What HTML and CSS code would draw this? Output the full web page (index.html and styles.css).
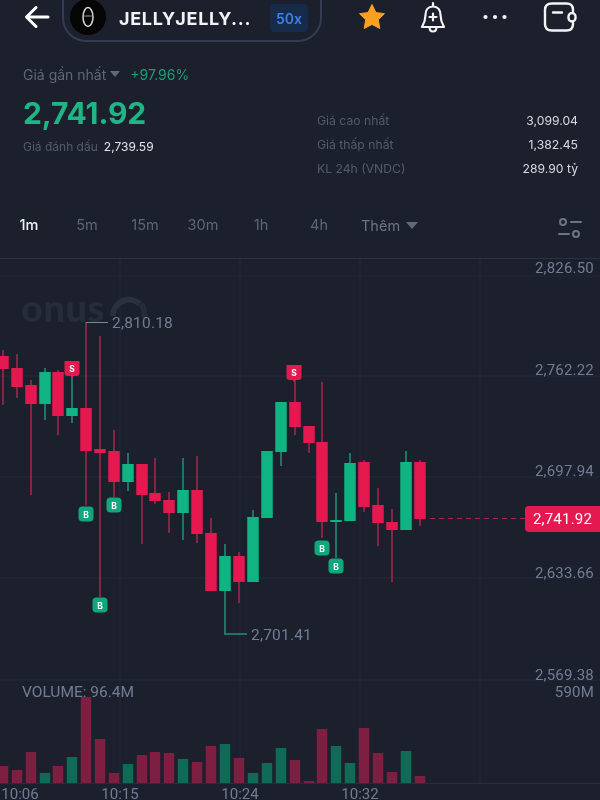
FILE: index.html
```html
<!DOCTYPE html>
<html lang="vi">
<head>
<meta charset="utf-8">
<title>JELLYJELLY</title>
<link rel="stylesheet" href="styles.css">
</head>
<body>
<div class="screen">
  <header class="topbar">
    <svg class="back" width="26" height="26" viewBox="0 0 26 26"><path d="M24 13H3M12 3.500 2.500 13 12 22.500"/></svg>
    <div class="pill">
      <svg class="avatar" width="36" height="36" viewBox="0 0 36 36"><circle cx="18" cy="18" r="18" fill="#050505"/><ellipse cx="18" cy="18" rx="5" ry="9.500" fill="none" stroke="#d8d8d8" stroke-width="1.500"/><path d="M13.500 17h9" stroke="#999" stroke-width="1"/></svg>
      <span class="symbol">JELLYJELLY...</span>
      <span class="leverage">50x</span>
    </div>
    <svg class="star" width="30" height="30" viewBox="0 0 30 30"><path d="M15 2.500l3.900 8 8.600 1.200-6.200 6.100 1.500 8.700L15 22.400l-7.800 4.100 1.500-8.700-6.200-6.100 8.600-1.200z"/></svg>
    <svg class="bell" width="28" height="32" viewBox="0 0 28 32"><path d="M14 5.500c-5 0-7.500 3.600-7.500 8.500 0 5-1.200 8-3.500 12h22c-2.300-4-3.500-7-3.500-12 0-4.900-2.500-8.500-7.500-8.500zM14 2v3.500M10.500 26c0 6 7 6 7 0M14 12.500v7M10.500 16h7"/></svg>
    <svg class="dots" width="24" height="6" viewBox="0 0 24 6"><circle cx="2.500" cy="3" r="2.100"/><circle cx="12" cy="3" r="2.100"/><circle cx="21.500" cy="3" r="2.100"/></svg>
    <svg class="wallet" width="36" height="32" viewBox="0 0 36 32"><path d="M31 10V9C31 4.500 29 2.500 24.500 2.500H10C5.500 2.500 3 4.500 3 9v14C3 27.500 5.500 29.500 10 29.500h14.500C29 29.500 31 27.500 31 23v-1M11 11.500h9"/><rect x="26.500" y="12" width="7" height="8.500" rx="3.500"/></svg>
  </header>

  <section class="stats">
    <div class="stats-left">
      <div class="last-row">
        <span class="muted">Giá gần nhất</span>
        <span class="caret"></span>
        <span class="change">+97.96%</span>
      </div>
      <div class="price">2,741.92</div>
      <div class="mark-row"><span class="muted-sm">Giá đánh dấu</span><span class="mark-val">2,739.59</span></div>
    </div>
    <div class="stats-right">
      <div class="stat-row"><span>Giá cao nhất</span><b>3,099.04</b></div>
      <div class="stat-row"><span>Giá thấp nhất</span><b>1,382.45</b></div>
      <div class="stat-row"><span>KL 24h (VNDC)</span><b>289.90 tỷ</b></div>
    </div>
  </section>

  <nav class="tabs">
    <span class="tab active">1m</span>
    <span class="tab">5m</span>
    <span class="tab">15m</span>
    <span class="tab">30m</span>
    <span class="tab">1h</span>
    <span class="tab">4h</span>
    <span class="more">Thêm<span class="caret caret-lg"></span></span>
    <svg class="filter" width="26" height="24" viewBox="0 0 26 24"><circle cx="6" cy="6" r="3"/><circle cx="19" cy="18" r="3"/><path d="M14 6h10M2 18h10"/></svg>
  </nav>

  <div class="chart">
    <svg class="plot" width="600" height="541" viewBox="0 259 600 541">
      <path class="grid" d="M0 276H600M0 376H600M0 477H600M0 578H600M0 680H600M120 259V783M240 259V783M360 259V783M480 259V783"/>
      <path class="axis" d="M0 783.500H600"/>

      <text class="mark-logo" x="21" y="322">onus</text>
      <path class="mark-arc" d="M113 316a16 16 0 0 1 27-12"/>
      <path class="mark-arc dim" d="M141 304a16 16 0 0 1 3 14"/>

      <path class="wick-red" d="M3 350V405M17 354V398M31 380V495M58 370V435M86 322V505M100 336V597M114 430V497M142 464V544M155 458V504M169 492V533M197 456V543M211 518V591M239 552V603M295 380V435M309 426V453M322 382V538M364 460V512M378 488V546M392 509V582M420 460V526"/>
      <path class="wick-green" d="M45 368V420M72 375V423M128 453V491M183 458V540M225 544V634H247M253 510V582M281 402V466M336 493V558M350 453V521M406 451V530"/>
      <path class="leader" d="M86 322.500H108"/>

      <path class="body-red" d="M3 356V369M17 368V387M31 385V404M58 372V416M86 408V451M100 449V453M114 451V482M142 464V495M155 493V501M169 500V513M197 490V534M211 533V591M239 556V582M295 402V427M309 426V443M322 442V522M364 462V507M378 505V523M392 522V530M420 462V519"/>
      <path class="body-green" d="M45 372V404M72 408V416M128 464V482M183 490V513M225 556V591M253 517V582M267 451V518M281 402V452M336 520V522M350 463V521M406 462V530"/>

      <g class="tag-red">
        <path d="M64.500 361h15v12a3 3 0 0 1-3 3h-3l-1.500 2-1.500-2h-3a3 3 0 0 1-3-3z"/><text x="72" y="372">S</text>
        <path d="M286.500 365h15v12a3 3 0 0 1-3 3h-3l-1.500 2-1.500-2h-3a3 3 0 0 1-3-3z"/><text x="294" y="376">S</text>
      </g>
      <g class="tag-green">
        <rect x="78.500" y="506.500" width="15" height="15" rx="4"/><text x="86" y="517.500">B</text>
        <rect x="92.500" y="597.500" width="15" height="15" rx="4"/><text x="100" y="608.500">B</text>
        <rect x="106.500" y="497.500" width="15" height="15" rx="4"/><text x="114" y="508.500">B</text>
        <rect x="314.500" y="540.500" width="15" height="15" rx="4"/><text x="322" y="551.500">B</text>
        <rect x="328.500" y="558.500" width="15" height="15" rx="4"/><text x="336" y="569.500">B</text>
      </g>

      <text class="peak" x="112" y="328">2,810.18</text>
      <text class="peak" x="251" y="640">2,701.41</text>

      <path class="dash" d="M430 518.500H525"/>

      <path class="vol-red" d="M3 766V783M17 770V783M31 752V783M58 766V783M86 697V783M100 739V783M114 773V783M142 755V783M155 752V783M169 753V783M197 762V783M211 746V783M239 758V783M295 760V783M309 781V783M322 729V783M364 728V783M378 753V783M392 772V783M420 776V783"/>
      <path class="vol-green" d="M45 773V783M72 757V783M128 764V783M183 759V783M225 744V783M253 773V783M267 763V783M281 748V783M336 746V783M350 763V783M406 751V783"/>

      <text class="vol-label" x="22" y="697">VOLUME: 96.4M</text>

      <g class="y-axis">
        <text x="594" y="273">2,826.50</text>
        <text x="594" y="374.500">2,762.22</text>
        <text x="594" y="476">2,697.94</text>
        <text x="594" y="578">2,633.66</text>
        <text x="594" y="680">2,569.38</text>
        <text x="594" y="697">590M</text>
      </g>
      <g class="x-axis">
        <text x="20" y="799">10:06</text>
        <text x="120" y="799">10:15</text>
        <text x="240" y="799">10:24</text>
        <text x="360" y="799">10:32</text>
      </g>
    </svg>
    <div class="price-tag">2,741.92</div>
  </div>
</div>
</body>
</html>
```

FILE: styles.css
```css
* { box-sizing: border-box; }
html, body { margin: 0; padding: 0; }
body { background: #1b202c; font-family: Inter, "Liberation Sans", sans-serif; }
.screen { width: 600px; height: 800px; overflow: hidden; display: flex; flex-direction: column; background: #1b202c; filter: blur(.35px); }

/* top bar */
.topbar { height: 42px; display: flex; align-items: flex-start; flex: none; padding-left: 24px; }
.back { margin-top: 4px; flex: none; }
.back path { fill: none; stroke: #fff; stroke-width: 3; stroke-linecap: round; stroke-linejoin: round; }
.pill { width: 260px; height: 42px; margin-left: 12px; display: flex; align-items: center; padding: 0 12px 4px 6px; border: 2px solid #333c52; border-top: 0; border-radius: 0 0 24px 24px; flex: none; }
.avatar { flex: none; margin-top: -2px; }
.symbol { margin-left: 13px; font-size: 18px; font-weight: 700; color: #f2f3f5; letter-spacing: .7px; white-space: nowrap; }
.leverage { margin-left: auto; width: 38px; height: 28px; background: #162a4a; color: #3f80e4; border-radius: 4px; font-size: 14px; font-weight: 600; display: flex; align-items: center; justify-content: center; }
.star { margin: 2px 0 0 35px; flex: none; }
.star path { fill: #f9a023; stroke: #f9a023; stroke-width: 1; stroke-linejoin: round; }
.bell { margin: 1px 0 0 32px; flex: none; }
.bell path { fill: none; stroke: #f4f4f6; stroke-width: 2.200; stroke-linecap: round; stroke-linejoin: round; }
.dots { margin: 14px 0 0 36px; flex: none; fill: #f4f4f6; }
.wallet { margin: 1px 0 0 35px; flex: none; fill: none; stroke: #f4f4f6; stroke-width: 2.400; stroke-linecap: round; }

/* price stats */
.stats { display: grid; grid-template-columns: 317px 261px; padding-top: 22px; height: 138px; flex: none; }
.stats-left { padding-left: 23px; }
.last-row { display: flex; align-items: center; height: 20px; }
.muted { font-size: 14px; color: #5f6778; }
.caret { display: inline-block; width: 0; height: 0; border-left: 5px solid transparent; border-right: 5px solid transparent; border-top: 6px solid #616a7c; margin-left: 4px; }
.change { margin-left: 10px; font-size: 14px; color: #1f9c78; }
.price { margin-top: 11px; height: 36px; line-height: 36px; font-size: 30px; font-weight: 700; color: #20b487; letter-spacing: -.1px; }
.mark-row { margin-top: 6px; height: 18px; display: flex; align-items: center; }
.muted-sm { font-size: 12px; color: #535b6c; }
.mark-val { margin-left: 6px; font-size: 12px; color: #e4e6ea; }
.stats-right { padding-top: 44px; }
.stat-row { display: flex; justify-content: space-between; align-items: center; height: 24px; font-size: 12.200px; }
.stat-row span { color: #535b6c; }
.stat-row b { font-weight: 400; color: #d8dbe1; }

/* timeframe tabs */
.tabs { height: 79px; flex: none; display: flex; align-items: center; padding-top: 10px; border-bottom: 1px solid #2a3143; }
.tab { width: 58px; text-align: center; font-size: 14.500px; color: #5d6677; }
.tab.active { color: #f2f3f5; font-weight: 500; }
.more { margin: 3px 0 0 13px; display: flex; align-items: center; font-size: 14.500px; color: #6b7486; }
.caret-lg { margin-left: 6px; border-left-width: 6px; border-right-width: 6px; border-top-width: 7px; }
.filter { margin-left: auto; margin-right: 17px; margin-top: 7px; fill: none; stroke: #6b7486; stroke-width: 2; stroke-linecap: round; }

/* chart */
.chart { position: relative; flex: 1; }
.plot { display: block; font-family: Roboto, "Liberation Sans", sans-serif; }
.grid { fill: none; stroke: #222836; stroke-width: 1; }
.axis { fill: none; stroke: #272e3d; stroke-width: 1; }
.mark-logo { font-family: Lato, sans-serif; font-size: 38px; font-weight: 900; fill: #262c3a; letter-spacing: .5px; }
.mark-arc { fill: none; stroke: #2a3040; stroke-width: 6; }
.mark-arc.dim { stroke: #252b39; }
.wick-red { fill: none; stroke: #a8274f; stroke-width: 1.500; }
.wick-green { fill: none; stroke: #1d9379; stroke-width: 1.500; }
.leader { fill: none; stroke: #7d8699; stroke-width: 1; }
.body-red { fill: none; stroke: #e5194f; stroke-width: 11.500; }
.body-green { fill: none; stroke: #0fb482; stroke-width: 11.500; }
.tag-red path { fill: #e5194f; }
.tag-green rect { fill: #10a77c; }
.tag-red text, .tag-green text { font-family: Inter, sans-serif; font-size: 8.500px; font-weight: 700; fill: #fff; text-anchor: middle; }
.peak { font-size: 15.500px; fill: #717d94; letter-spacing: .2px; }
.dash { fill: none; stroke: #b82049; stroke-width: 1; stroke-dasharray: 5 4; }
.vol-red { fill: none; stroke: #7e1e40; stroke-width: 10.500; }
.vol-green { fill: none; stroke: #0f6a56; stroke-width: 10.500; }
.vol-label { font-size: 15.500px; fill: #717d94; }
.y-axis text { font-size: 15px; fill: #717d94; text-anchor: end; letter-spacing: .2px; }
.x-axis text { font-size: 15px; fill: #717d94; text-anchor: middle; }
.price-tag { position: absolute; left: 525px; top: 247px; width: 75px; height: 26px; border-radius: 4px 0 0 4px; background: #e5194f; color: #fff; font-family: Roboto, sans-serif; font-size: 15px; letter-spacing: .2px; display: flex; align-items: center; justify-content: center; }
```
